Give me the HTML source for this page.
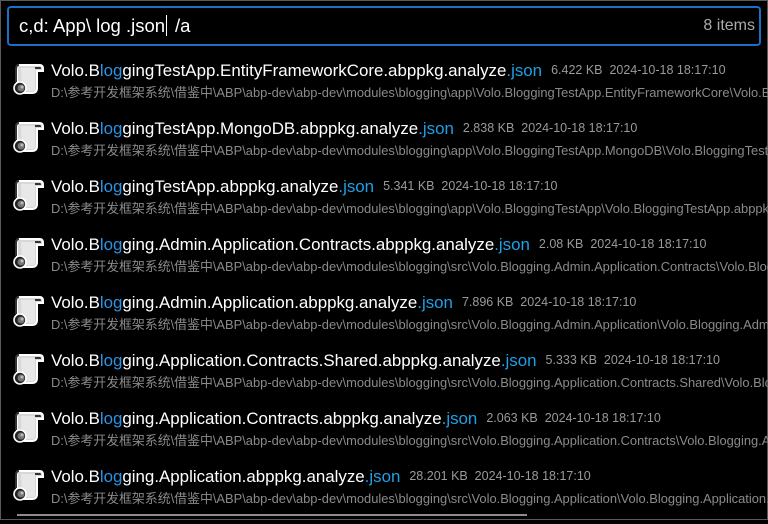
<!DOCTYPE html>
<html><head><meta charset="utf-8"><style>
html,body{margin:0;padding:0;background:#000;}
body{width:768px;height:520px;position:relative;overflow:hidden;font-family:"Liberation Sans","Noto Sans CJK SC",sans-serif;}
.frame{position:absolute;left:0;top:0;width:766px;height:518px;border:1px solid #5a5a5a;}
.search{position:absolute;left:7px;top:6px;width:750px;height:36px;border:2px solid #1b6fc4;border-radius:4px;}
.q{position:absolute;left:10px;top:7px;color:#fff;font-size:18.5px;}
.caret{display:inline-block;width:1px;height:21px;background:#fff;vertical-align:-4px;margin:0 8px 0 1px;}
.cnt{position:absolute;right:4px;top:9px;color:#aaa;font-size:16px;}
.row{position:absolute;left:0;height:58px;width:768px;white-space:nowrap;overflow:hidden;}
.ic{position:absolute;left:12px;top:2px;}
.t{position:absolute;left:51px;top:1px;color:#fff;font-size:16.9px;}
.t .h{color:#2a93e6}.t .j{color:#1ea0e6}
.m{color:#9a9a9a;font-size:12.5px;margin-left:9px;vertical-align:2px;}
.p{position:absolute;left:51px;top:22px;color:#8a8a8a;font-size:12.9px;}
.sb{position:absolute;left:17px;top:514px;width:510px;height:2px;background:#8c8c8c;}
</style></head><body>
<div class="frame"></div>
<div class="search"><div class="q">c,d: App\ log .json<span class="caret"></span>/a</div><div class="cnt">8 items</div></div>

<svg width="0" height="0" style="position:absolute"><defs>
<g id="icn">
<path d="M7 3 H28 Q31 3 31 7 V9 H25 V26 Q25 31 20 31 H9 Q5 31 5 27 V6 Q5 3 7 3Z" fill="#d8d8d8" stroke="#fff" stroke-width="2"/>
<path d="M9 6 H23 V26 Q23 29 20 29 H10 Z" fill="#e8e8e8"/>
<path d="M23 5 H28 Q29 5 29 7 H23Z" fill="#333"/>
<path d="M7 3 Q4 3 4 7 V20" fill="none" stroke="#333" stroke-width="2"/>
<circle cx="8" cy="26" r="6" fill="#222" stroke="#fff" stroke-width="1.6"/>
<circle cx="9" cy="26" r="3.5" fill="#777"/>
<circle cx="10" cy="25" r="1.5" fill="#bbb"/>
</g></defs></svg>

<div class="row" style="top:60px"><svg class="ic" width="34" height="34" viewBox="0 0 34 34"><use href="#icn"/></svg><div class="t">Volo.B<span class="h">log</span>gingTestApp.EntityFrameworkCore.abppkg.analyze<span class="j">.json</span><span class="m">6.422 KB&nbsp;&nbsp;2024-10-18 18:17:10</span></div><div class="p">D:\参考开发框架系统\借鉴中\ABP\abp-dev\abp-dev\modules\blogging\app\Volo.BloggingTestApp.EntityFrameworkCore\Volo.BloggingTestApp.EntityFrameworkCore.abppkg.analyze.json</div></div>

<div class="row" style="top:118px"><svg class="ic" width="34" height="34" viewBox="0 0 34 34"><use href="#icn"/></svg><div class="t">Volo.B<span class="h">log</span>gingTestApp.MongoDB.abppkg.analyze<span class="j">.json</span><span class="m">2.838 KB&nbsp;&nbsp;2024-10-18 18:17:10</span></div><div class="p">D:\参考开发框架系统\借鉴中\ABP\abp-dev\abp-dev\modules\blogging\app\Volo.BloggingTestApp.MongoDB\Volo.BloggingTestApp.MongoDB.abppkg.analyze.json</div></div>

<div class="row" style="top:176px"><svg class="ic" width="34" height="34" viewBox="0 0 34 34"><use href="#icn"/></svg><div class="t">Volo.B<span class="h">log</span>gingTestApp.abppkg.analyze<span class="j">.json</span><span class="m">5.341 KB&nbsp;&nbsp;2024-10-18 18:17:10</span></div><div class="p">D:\参考开发框架系统\借鉴中\ABP\abp-dev\abp-dev\modules\blogging\app\Volo.BloggingTestApp\Volo.BloggingTestApp.abppkg.analyze.json</div></div>

<div class="row" style="top:234px"><svg class="ic" width="34" height="34" viewBox="0 0 34 34"><use href="#icn"/></svg><div class="t">Volo.B<span class="h">log</span>ging.Admin.Application.Contracts.abppkg.analyze<span class="j">.json</span><span class="m">2.08 KB&nbsp;&nbsp;2024-10-18 18:17:10</span></div><div class="p">D:\参考开发框架系统\借鉴中\ABP\abp-dev\abp-dev\modules\blogging\src\Volo.Blogging.Admin.Application.Contracts\Volo.Blogging.Admin.Application.Contracts.abppkg.analyze.json</div></div>

<div class="row" style="top:292px"><svg class="ic" width="34" height="34" viewBox="0 0 34 34"><use href="#icn"/></svg><div class="t">Volo.B<span class="h">log</span>ging.Admin.Application.abppkg.analyze<span class="j">.json</span><span class="m">7.896 KB&nbsp;&nbsp;2024-10-18 18:17:10</span></div><div class="p">D:\参考开发框架系统\借鉴中\ABP\abp-dev\abp-dev\modules\blogging\src\Volo.Blogging.Admin.Application\Volo.Blogging.Admin.Application.abppkg.analyze.json</div></div>

<div class="row" style="top:350px"><svg class="ic" width="34" height="34" viewBox="0 0 34 34"><use href="#icn"/></svg><div class="t">Volo.B<span class="h">log</span>ging.Application.Contracts.Shared.abppkg.analyze<span class="j">.json</span><span class="m">5.333 KB&nbsp;&nbsp;2024-10-18 18:17:10</span></div><div class="p">D:\参考开发框架系统\借鉴中\ABP\abp-dev\abp-dev\modules\blogging\src\Volo.Blogging.Application.Contracts.Shared\Volo.Blogging.Application.Contracts.Shared.abppkg.analyze.json</div></div>

<div class="row" style="top:408px"><svg class="ic" width="34" height="34" viewBox="0 0 34 34"><use href="#icn"/></svg><div class="t">Volo.B<span class="h">log</span>ging.Application.Contracts.abppkg.analyze<span class="j">.json</span><span class="m">2.063 KB&nbsp;&nbsp;2024-10-18 18:17:10</span></div><div class="p">D:\参考开发框架系统\借鉴中\ABP\abp-dev\abp-dev\modules\blogging\src\Volo.Blogging.Application.Contracts\Volo.Blogging.Application.Contracts.abppkg.analyze.json</div></div>

<div class="row" style="top:466px"><svg class="ic" width="34" height="34" viewBox="0 0 34 34"><use href="#icn"/></svg><div class="t">Volo.B<span class="h">log</span>ging.Application.abppkg.analyze<span class="j">.json</span><span class="m">28.201 KB&nbsp;&nbsp;2024-10-18 18:17:10</span></div><div class="p">D:\参考开发框架系统\借鉴中\ABP\abp-dev\abp-dev\modules\blogging\src\Volo.Blogging.Application\Volo.Blogging.Application.abppkg.analyze.json</div></div>

<div class="sb"></div>
</body></html>
